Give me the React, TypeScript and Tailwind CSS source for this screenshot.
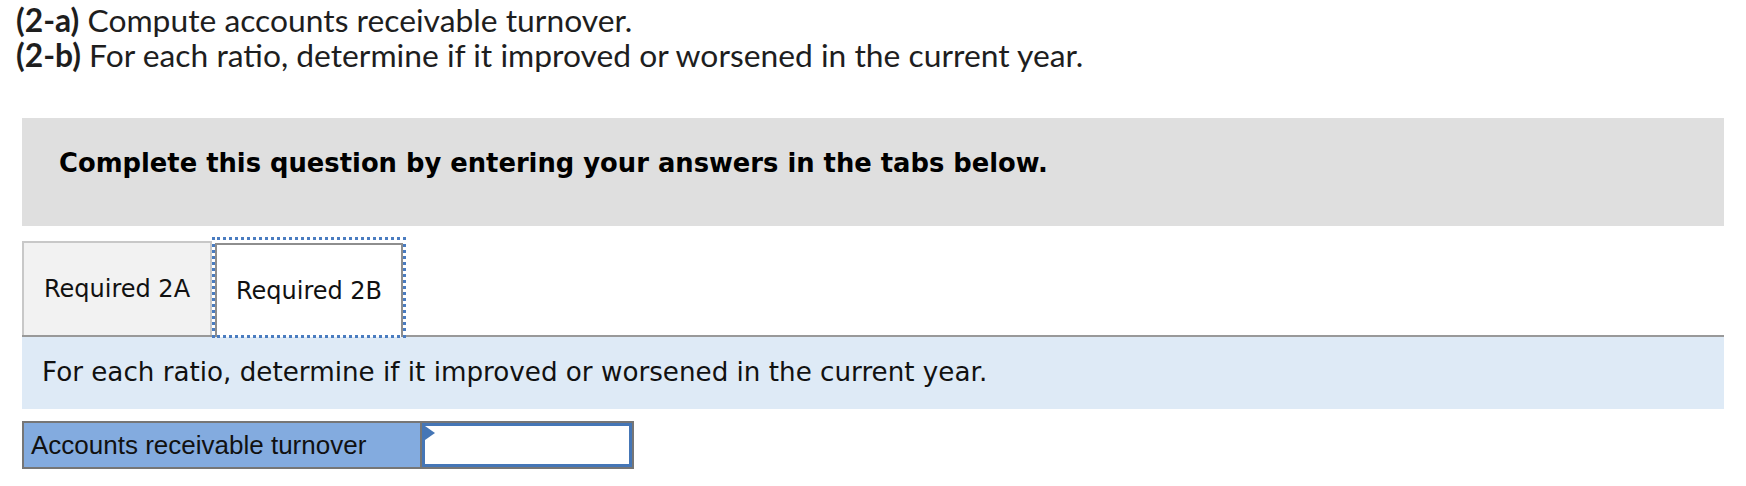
import React from 'react';

const verdana = { fontFamily: '"DejaVu Sans", Verdana, sans-serif' };

export default function App() {
  return (
    <div className="w-[1746px] h-[486px] bg-white overflow-hidden text-black">
      {/* question header */}
      <div className="pl-[16px] pt-[3px] text-[31.8px] leading-[35px] text-[#1e1e1e] font-['Lato',sans-serif]">
        <p>
          <span className="font-bold">(2-a)</span> Compute accounts receivable turnover.
        </p>
        <p>
          <span className="font-bold">(2-b)</span> For each ratio, determine if it improved or worsened in the current year.
        </p>
      </div>

      <div className="mx-[22px] mt-[45px]">
        <div className="h-[108px] bg-[#dfdfdf] pl-[37px] pt-[30px]">
          <p className="text-[25.8px] leading-[30px] font-bold" style={verdana}>
            Complete this question by entering your answers in the tabs below.
          </p>
        </div>

        {/* tabs */}
        <div className="mt-[14px] flex items-end border-b-2 border-[#999999]" style={verdana}>
          <button
            type="button"
            className="h-[94px] w-[190px] flex items-center justify-center bg-[#f2f2f2] border-2 border-b-0 border-[#c8c8c8] text-[24px] text-[#111]"
          >
            Required 2A
          </button>
          <div className="relative z-10 ml-[3px] -mb-[2px] w-[188px] h-[97px] pt-[3px]">
            <button
              type="button"
              className="h-full w-full flex items-center justify-center bg-white border-2 border-b-0 border-[#8e8e8e] text-[24px] text-[#111] outline-none"
            >
              Required 2B
            </button>
            <span className="pointer-events-none absolute -left-[3px] -right-[3px] -top-[3px] -bottom-[1px] border-[3px] border-dotted border-[#4a7cc0]" />
          </div>
        </div>

        <div className="h-[72px] bg-[#deeaf6] flex items-center pl-[20px]" style={verdana}>
          <p className="text-[26.2px] text-[#111]">For each ratio, determine if it improved or worsened in the current year.</p>
        </div>

        {/* answer row */}
        <div className="mt-[12px] flex w-[612px] h-[48px] border-2 border-[#767676]">
          <div className="w-[398px] bg-[#83abdf] flex items-center pl-[7px] text-[26px] text-[#111] font-['Liberation_Sans',Arial,sans-serif] border-r-2 border-[#767676]">
            Accounts receivable turnover
          </div>
          <div className="relative flex-1 bg-white border-[3px] border-[#4576b6]">
            <svg className="absolute left-0 top-0" width="11" height="14" viewBox="0 0 11 14">
              <polygon points="0,0 10,7 0,14" fill="#4576b6" />
            </svg>
            <input type="text" className="w-full h-full outline-none bg-transparent px-2 text-[20px]" />
          </div>
        </div>
      </div>
    </div>
  );
}
